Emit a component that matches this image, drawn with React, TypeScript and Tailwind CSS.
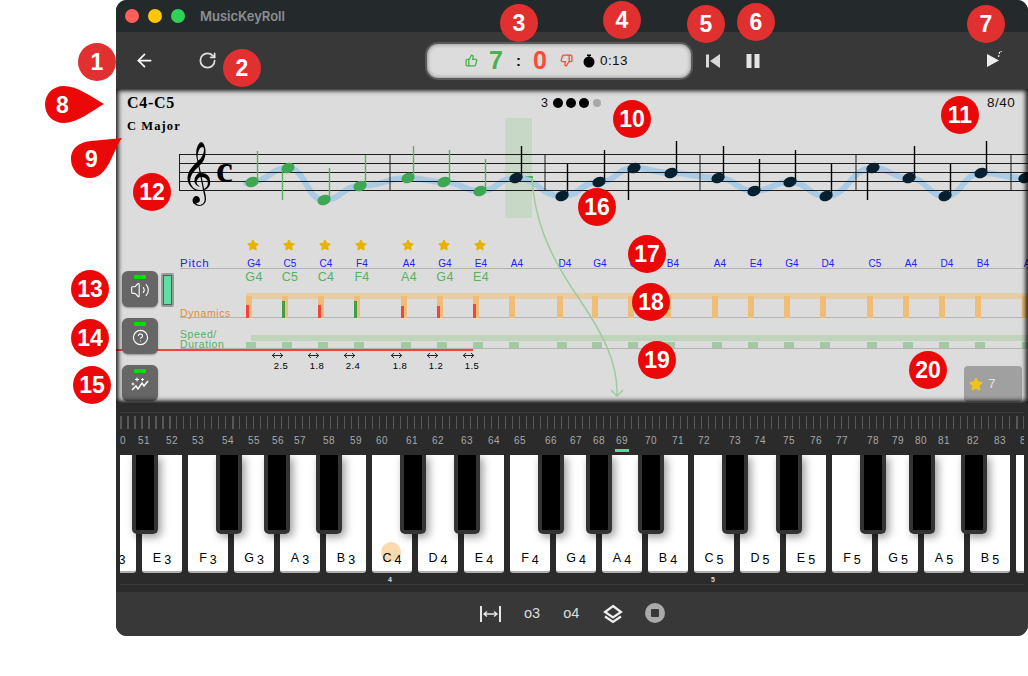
import { ArrowLeft, CircleHelp, RotateCw, ThumbsDown, ThumbsUp, Volume2 } from "lucide-react";
import { FaStar } from "react-icons/fa";

const SANS = "font-['Liberation_Sans',Arial,sans-serif]";

// x of note heads on the staff, head y, stem end y. stem goes down when down is set
const notes = [
  { x: 252, y: 182, end: 151 },
  { x: 288, y: 168, end: 200, down: true },
  { x: 324, y: 200, end: 168 },
  { x: 360, y: 186, end: 155 },
  { x: 408, y: 178, end: 146 },
  { x: 444, y: 182, end: 150 },
  { x: 480, y: 191, end: 159 },
  { x: 516, y: 178, end: 146 },
  { x: 562, y: 196, end: 164 },
  { x: 599, y: 182, end: 150 },
  { x: 634, y: 168, end: 200, down: true },
  { x: 671, y: 173, end: 141 },
  { x: 718, y: 178, end: 146 },
  { x: 754, y: 191, end: 159 },
  { x: 790, y: 182, end: 150 },
  { x: 826, y: 196, end: 164 },
  { x: 873, y: 168, end: 200, down: true },
  { x: 909, y: 178, end: 146 },
  { x: 945, y: 196, end: 164 },
  { x: 981, y: 173, end: 141 },
  { x: 1025, y: 178, end: 146 },
];

const ticks = [246, 282, 318, 354, 401, 437, 473, 509, 557, 592, 628, 665, 712, 748, 784, 820, 867, 903, 939, 975, 1022];
const pitchNames = ["G4", "C5", "C4", "F4", "A4", "G4", "E4", "A4", "D4", "G4", "C5", "B4", "A4", "E4", "G4", "D4", "C5", "A4", "D4", "B4", "A4"];
const played = pitchNames.slice(0, 7);
const hits = [
  { h: 13, good: false },
  { h: 17, good: true },
  { h: 13, good: false },
  { h: 17, good: true },
  { h: 12, good: false },
  { h: 12, good: false },
  { h: 14, good: false },
];
const durations = [
  { x: 281, v: "2.5" },
  { x: 317, v: "1.8" },
  { x: 353, v: "2.4" },
  { x: 400, v: "1.8" },
  { x: 436, v: "1.2" },
  { x: 472, v: "1.5" },
];

const whiteKeys = ["D3", "E3", "F3", "G3", "A3", "B3", "C4", "D4", "E4", "F4", "G4", "A4", "B4", "C5", "D5", "E5", "F5", "G5", "A5", "B5", "C6"];
const blackKeys = [132, 216, 264, 316, 400, 454, 538, 586, 638, 722, 776, 860, 909, 961];
const midiNumbers = [
  [50, 120], [51, 144], [52, 172], [53, 198], [54, 228], [55, 254], [56, 278], [57, 300], [58, 329], [59, 356], [60, 382],
  [61, 412], [62, 438], [63, 467], [64, 494], [65, 520], [66, 551], [67, 576], [68, 599], [69, 622], [70, 651], [71, 678],
  [72, 704], [73, 735], [74, 760], [75, 789], [76, 816], [77, 842], [78, 873], [79, 898], [80, 921], [81, 944], [82, 973],
  [83, 1000], [84, 1026],
];

// callout numbers over the screenshot
const badges = [
  { n: 1, cls: "left-[78px] top-[43px] bg-[#e03030]" },
  { n: 2, cls: "left-[223px] top-[49px] bg-[#e03030]" },
  { n: 3, cls: "left-[500px] top-[4px] bg-[#e03030]" },
  { n: 4, cls: "left-[603px] top-[1px] bg-[#e03030]" },
  { n: 5, cls: "left-[687px] top-[5px] bg-[#e03030]" },
  { n: 6, cls: "left-[737px] top-[3px] bg-[#e03030]" },
  { n: 7, cls: "left-[967px] top-[5px] bg-[#e03030]" },
  { n: 10, cls: "left-[613px] top-[100px] bg-[#ea0808]" },
  { n: 11, cls: "left-[941px] top-[96px] bg-[#ea0808]" },
  { n: 12, cls: "left-[133px] top-[173px] bg-[#ea0808]" },
  { n: 13, cls: "left-[71px] top-[270px] bg-[#ea0808]" },
  { n: 14, cls: "left-[71px] top-[319px] bg-[#ea0808]" },
  { n: 15, cls: "left-[73px] top-[366px] bg-[#ea0808]" },
  { n: 16, cls: "left-[578px] top-[188px] bg-[#ea0808]" },
  { n: 17, cls: "left-[628px] top-[235px] bg-[#ea0808]" },
  { n: 18, cls: "left-[632px] top-[283px] bg-[#ea0808]" },
  { n: 19, cls: "left-[638px] top-[341px] bg-[#ea0808]" },
  { n: 20, cls: "left-[909px] top-[351px] bg-[#ea0808]" },
];

function ribbonPath() {
  let d = `M${notes[0].x - 6} ${notes[0].y + 1}`;
  for (let i = 0; i < notes.length - 1; i++) {
    const a = notes[i];
    const b = notes[i + 1];
    const mid = (a.x + b.x) / 2;
    d += ` C${mid} ${a.y} ${mid} ${b.y} ${b.x} ${b.y}`;
  }
  return d;
}

function Staff() {
  return (
    <svg viewBox="116 130 912 95" className="relative block h-[95px] w-[912px] shrink-0">
      <path d={ribbonPath()} fill="none" stroke="#a9cbe6" strokeWidth="6" strokeLinecap="round" />
      {[154.5, 163.5, 172.5, 181.5, 190.5].map((y) => (
        <line key={y} x1="179" x2="1028" y1={y} y2={y} stroke="#1c1c1c" strokeWidth="1" />
      ))}
      {[179.5, 390, 545, 700, 856, 1011].map((x) => (
        <line key={x} x1={x} x2={x} y1="154" y2="191" stroke="#1c1c1c" strokeWidth="1" />
      ))}
      <text x="181" y="190" fontSize="54" fontFamily="DejaVu Sans" fill="#000">𝄞</text>
      <text x="216" y="182" fontSize="38" fontWeight="700" fontFamily="Liberation Serif" fill="#000">c</text>
      {notes.map((n, i) => {
        const green = i < 7;
        const stemX = n.down ? n.x - 5.5 : n.x + 5.5;
        return (
          <g key={n.x}>
            <line x1={stemX} x2={stemX} y1={n.y} y2={n.end} stroke={green ? "#56b45f" : "#000"} strokeWidth="1.4" />
            <ellipse cx={n.x} cy={n.y} rx="6.8" ry="5" transform={`rotate(-20 ${n.x} ${n.y})`} fill={green ? "#3fa754" : "#07202f"} />
          </g>
        );
      })}
    </svg>
  );
}

function Lanes() {
  return (
    <div className={`${SANS} flex flex-col`}>
      <div className="relative mt-[13px] h-[14px]">
        {played.map((_, i) => (
          <FaStar key={i} size={12} className="absolute top-px text-[#e5b300]" style={{ left: ticks[i] + 1 - 116 }} />
        ))}
      </div>
      <div className="relative mt-[4px] ml-[64px] h-[13px] border-b border-[#b4b4b4]">
        <span className="absolute left-0 top-[1px] text-[11.5px] leading-[13px] tracking-[0.8px] text-[#2222f0]">Pitch</span>
        {pitchNames.map((p, i) => (
          <span key={i} className="absolute top-[2px] -translate-x-1/2 text-[10px] leading-[11px] tracking-[0.2px] text-[#2222f0]" style={{ left: ticks[i] + 8 - 180 }}>
            {p}
          </span>
        ))}
      </div>
      <div className="relative mt-[1px] ml-[64px] h-[14px]">
        {played.map((p, i) => (
          <span key={i} className="absolute top-0 -translate-x-1/2 text-[12.5px] leading-[14px] tracking-[0.3px] text-[#55b25e]" style={{ left: ticks[i] + 8 - 180 }}>
            {p}
          </span>
        ))}
      </div>
      <div className="relative mt-[9px] h-[25px] border-b-0">
        <div className="absolute left-[130px] right-0 top-0 h-[6px] bg-[#e8cca8]" />
        <div className="absolute left-[64px] right-0 bottom-0 h-px bg-[#b4b4b4]" />
        <span className="absolute left-[64px] bottom-[-1px] text-[10.5px] leading-[12px] tracking-[0.6px] text-[#e08e2b]">Dynamics</span>
        {ticks.map((x) => (
          <div key={x} className="absolute bottom-0 top-[3px] w-[6px] bg-[#efbd75]" style={{ left: x - 116 }} />
        ))}
        {hits.map((h, i) => (
          <div
            key={i}
            className={h.good ? "absolute bottom-0 w-[3px] bg-[#3f9c48]" : "absolute bottom-0 w-[3px] bg-[#f4433a]"}
            style={{ left: ticks[i] - 116, height: h.h }}
          />
        ))}
      </div>
      <div className="relative mt-[8px] h-[23px]">
        <div className="absolute left-[135px] right-0 top-[9px] h-[6px] bg-[#c0d4bc]" />
        <div className="absolute left-[64px] right-0 bottom-0 h-px bg-[#b4b4b4]" />
        <span className="absolute left-[64px] top-[3px] text-[10.5px] leading-[10px] tracking-[0.6px] text-[#55b25e]">
          Speed/
          <br />
          Duration
        </span>
        {ticks.map((x) => (
          <div key={x} className="absolute bottom-[1px] h-[6px] w-[10px] bg-[#a2c9a4]" style={{ left: x - 116 }} />
        ))}
        <div className="absolute bottom-[-2px] left-0 h-[2px] w-[357px] bg-[#f4433a]" />
      </div>
      <div className="relative mt-[3px] h-[24px] text-black">
        {durations.map((d) => (
          <div key={d.x} className="absolute top-0 flex -translate-x-1/2 flex-col items-center" style={{ left: d.x - 116 }}>
            <svg viewBox="0 0 12 7" className="mr-[7px] h-[7px] w-[12px]">
              <path d="M.7 3.5h10.6M3.5 1 .8 3.5 3.5 6M8.500 1l2.700 2.500L8.500 6" fill="none" stroke="#111" strokeWidth="0.9" />
            </svg>
            <span className="mt-[1px] text-[9.5px] leading-[11px] tracking-[0.4px]">{d.v}</span>
          </div>
        ))}
      </div>
    </div>
  );
}

function SideButton({ children }: { children: React.ReactNode }) {
  return (
    <div className="relative flex h-[36px] w-[36px] items-center justify-center rounded-[6px] bg-[#666] pt-[2px] shadow-[0_1px_2px_rgba(0,0,0,0.35)]">
      <div className="absolute left-[12px] top-[4px] h-[4px] w-[12px] bg-[#00e000]" />
      {children}
    </div>
  );
}

function Score() {
  return (
    <div className="relative h-[314px] w-full shrink-0 overflow-hidden bg-[#dcdcdc]">
      <div className="absolute left-[389px] top-[29px] h-[100px] w-[27px] bg-[#c8d8c6]" />
      <div className="absolute left-[405px] top-[87px] h-[3px] w-[12px] bg-[#4caf50]" />
      <div className={`${SANS} relative flex h-[41px] pl-[11px] pt-[5px]`}>
        <div className="w-[414px] font-['Liberation_Serif',serif] font-bold text-black">
          <div className="text-[16px] leading-[18px] tracking-[0.7px]">C4-C5</div>
          <div className="mt-[7px] text-[12.5px] leading-[14px] tracking-[1.1px]">C Major</div>
        </div>
        <div className="flex h-[18px] w-[446px] items-center text-[12.5px] text-[#111]">
          3
          <span className="ml-[5px] h-[10px] w-[10px] rounded-full bg-black" />
          <span className="ml-[3px] h-[10px] w-[10px] rounded-full bg-black" />
          <span className="ml-[3px] h-[10px] w-[10px] rounded-full bg-black" />
          <span className="ml-[4px] h-[8px] w-[8px] rounded-full bg-[#a8a8a8]" />
        </div>
        <div className="h-[18px] text-[13.5px] leading-[18px] tracking-[0.5px] text-[#111]">8/40</div>
      </div>
      <Staff />
      <Lanes />

      <svg viewBox="116 89 912 314" className="pointer-events-none absolute left-0 top-0 h-[314px] w-[912px]">
        <path d="M532 178C534 215 546 252 580 300C600 330 618 360 617 395M611 390l6 6 6-6" fill="none" stroke="#9ccc9e" strokeWidth="1.5" />
      </svg>

      <div className="absolute left-[6px] top-[182px] flex flex-col gap-[11px]">
        <SideButton>
          <Volume2 size={20} strokeWidth={1.3} className="text-white" />
        </SideButton>
        <SideButton>
          <CircleHelp size={17} strokeWidth={1.6} className="text-white" />
        </SideButton>
        <SideButton>
          <svg viewBox="0 0 18 16" className="h-[16px] w-[18px]" fill="none" stroke="#fff" strokeWidth="1.5">
            <path d="M1 14l4-4 2 3 4-6 2 3 4-5" />
            <path d="M6 1.500v4M4 3.500h4M2 6.500v3M.5 8h3M11.500 2v3M10 3.500h3" strokeWidth="1" />
          </svg>
        </SideButton>
      </div>
      <div className="absolute left-[45px] top-[184px] h-[34px] w-[13px] rounded-[2px] bg-[#9a9a9a] p-[2px]">
        <div className="h-full w-full border border-[#3d6b55] bg-[#60e0a0]" />
      </div>

      <div className={`${SANS} absolute right-[6px] top-[277px] flex h-[36px] w-[58px] items-center rounded-[4px] bg-[#a0a0a0] pl-[5px] text-[13.5px] text-[#e2e2e2]`}>
        <FaStar size={14} className="text-[#f2c40f]" />
        <span className="ml-[5px]">7</span>
      </div>

      <div className="pointer-events-none absolute inset-0 shadow-[inset_0_2px_5px_rgba(0,0,0,0.55),inset_3px_0_4px_rgba(0,0,0,0.55),inset_-3px_0_4px_rgba(0,0,0,0.55),inset_0_-3px_4px_rgba(0,0,0,0.55)]" />
    </div>
  );
}

function Keyboard() {
  return (
    <div className={`${SANS} relative flex h-[189px] w-full shrink-0 flex-col bg-[#2b2b2b]`}>
      <div className="mx-[4px] mt-[9px] border-t border-[#3a3a3a]" />
      <div className="mx-[4px] mt-[3px] h-[13px] bg-[repeating-linear-gradient(90deg,#585858_0,#585858_1.500px,transparent_1.500px,transparent_7px)]" />
      <div className="relative mx-[4px] h-[26px] overflow-hidden">
        {midiNumbers.map(([n, x]) => (
          <span key={n} className="absolute top-[6px] -translate-x-1/2 text-[10px] leading-[11px] tracking-[0.4px] text-[#a8a8a8]" style={{ left: x - 120 }}>
            {n}
          </span>
        ))}
        <div className="absolute left-[495px] top-[20px] h-[3px] w-[14px] bg-[#4ce0a0]" />
      </div>
      <div className="relative mx-[4px] h-[118px] overflow-hidden">
        <div className="ml-[-24px] flex h-full gap-[6px]">
          {whiteKeys.map((k) => (
            <div key={k} className="relative flex h-full w-[40px] shrink-0 items-end justify-center rounded-b-[3px] border-b-2 border-[#b0b0b0] bg-white pb-[4px] text-black">
              {k === "C4" && <div className="absolute left-[9px] top-[87px] h-[20px] w-[20px] rounded-full bg-[#fbd9ae]" />}
              <span className="relative mb-[2px] text-[12.5px] leading-[14px]">{k[0]}</span>
              <span className="relative ml-[3px] text-[12.5px] leading-[13px]">{k[1]}</span>
            </div>
          ))}
        </div>
        {blackKeys.map((x) => (
          <div
            key={x}
            className="absolute top-0 h-[79px] w-[26px] rounded-b-[5px] border-x-[4px] border-b-[4px] border-[#333] bg-black shadow-[3px_3px_8px_rgba(0,0,0,0.4)]"
            style={{ left: x - 120 }}
          />
        ))}
      </div>
      <div className="relative mx-[4px] h-[12px] border-b border-[#3a3a3a] text-[7px] font-bold leading-[12px] text-[#ddd]">
        <span className="absolute left-[268px] top-[1px]">4</span>
        <span className="absolute left-[591px] top-[1px]">5</span>
      </div>
    </div>
  );
}

function App() {
  return (
    <div className="relative h-[676px] w-[1028px] overflow-hidden bg-white">
      <div className="ml-[116px] flex h-[636px] w-[912px] flex-col overflow-hidden rounded-[11px] bg-[#383838]">
        <div className="flex h-[32px] w-full shrink-0 items-center bg-[#24292c] pl-[9px]">
          <span className="h-[14px] w-[14px] rounded-full bg-[#ff5f57]" />
          <span className="ml-[9px] h-[14px] w-[14px] rounded-full bg-[#ffc800]" />
          <span className="ml-[9px] h-[14px] w-[14px] rounded-full bg-[#30d158]" />
          <span className="ml-[15px] mt-[1px] font-['Inter',sans-serif] text-[13px] font-semibold text-[#8b9094]">MusicKeyRoll</span>
        </div>

        <div className={`${SANS} flex h-[57px] w-full shrink-0 items-center bg-[#383838] pl-[18px]`}>
          <ArrowLeft size={21} strokeWidth={2} className="text-white" />
          <RotateCw size={19} strokeWidth={2.2} className="ml-[43px] text-[#e0e0e0]" />
          <div className="ml-[210px] flex h-[34px] w-[264px] items-center rounded-[11px] bg-[#dcdcdc] pl-[38px] shadow-[0_0_0_2px_#5a5a5a,inset_0_0_4px_rgba(0,0,0,0.45)]">
            <ThumbsUp size={13} strokeWidth={2.4} className="text-[#4caf50]" />
            <span className="ml-[11px] w-[16px] text-[25px] font-bold leading-none text-[#4caf50]">7</span>
            <span className="ml-[11px] text-[15px] font-bold leading-none text-[#111]">:</span>
            <span className="ml-[12px] w-[17px] text-[25px] font-bold leading-none text-[#ff4a3a]">0</span>
            <ThumbsDown size={13} strokeWidth={2.4} className="ml-[10px] text-[#ff4a3a]" />
            <svg viewBox="0 0 12 14" className="ml-[10px] h-[14px] w-[12px]">
              <circle cx="6" cy="8" r="5.500" fill="#000" />
              <rect x="4" y="0.500" width="4" height="1.500" fill="#000" />
              <rect x="5.300" y="1.500" width="1.400" height="2" fill="#000" />
            </svg>
            <span className="ml-[5px] text-[13.5px] leading-none tracking-[0.4px] text-[#111]">0:13</span>
          </div>
          <svg viewBox="0 0 14 14" className="ml-[15px] h-[14px] w-[14px]" fill="#d8d8d8">
            <rect x="0" y="0.500" width="3" height="13" />
            <path d="M14 0 4 7l10 7z" />
          </svg>
          <svg viewBox="0 0 14 14" className="ml-[26px] h-[14px] w-[14px]" fill="#e4e4e4">
            <rect x="0.500" y="0" width="5" height="14" />
            <rect x="8.500" y="0" width="5" height="14" />
          </svg>
          <svg viewBox="0 0 15 19" className="mb-[6px] ml-[227px] h-[19px] w-[15px]" fill="#eee">
            <path d="M0 6l12 6.500L0 19z" />
            <path d="M11.500 9l1.300-5.500h2" fill="none" stroke="#eee" strokeWidth="1.200" strokeDasharray="2 1.200" />
          </svg>
        </div>

        <Score />
        <Keyboard />

        <div className={`${SANS} flex h-[44px] w-full shrink-0 items-center bg-[#383838] pl-[364px] text-[14.5px] text-[#ddd]`}>
          <svg viewBox="0 0 21 16" className="h-[16px] w-[21px]" fill="none" stroke="#e6e6e6">
            <path d="M1 0v16M20 0v16" strokeWidth="2" />
            <path d="M4 8h13M7 5.500 4 8l3 2.500M14 5.500 17 8l-3 2.500" strokeWidth="1.400" />
          </svg>
          <span className="ml-[23px]">o3</span>
          <span className="ml-[23px]">o4</span>
          <svg viewBox="0 0 20 20" className="ml-[24px] h-[20px] w-[20px]" fill="none" stroke="#f0f0f0" strokeWidth="2.200">
            <path d="M10 2 18 8l-8 5.500L2 8z" />
            <path d="M2 12.500 10 18l8-5.500" />
          </svg>
          <div className="ml-[22px] mb-[3px] flex h-[20px] w-[20px] items-center justify-center rounded-full bg-[#aaa]">
            <div className="h-[8px] w-[8px] rounded-[1px] bg-[#383838]" />
          </div>
        </div>
      </div>

      {badges.map((b) => (
        <div
          key={b.n}
          className={`absolute flex h-[38px] w-[38px] items-center justify-center rounded-full font-['Liberation_Sans',Arial,sans-serif] text-[23px] font-bold text-white ${b.cls}`}
        >
          {b.n}
        </div>
      ))}
      <svg viewBox="0 0 60 40" className="absolute left-[43px] top-[85px] h-[40px] w-[62px]">
        <path d="M20 1C33 1 48 12 60 19C48 26 33 38 20 38C9 38 1 30 1 19.500C1 9 9 1 20 1Z" fill="#ea0808" />
      </svg>
      <span className="absolute left-[56px] top-[91px] font-['Liberation_Sans',Arial,sans-serif] text-[23px] font-bold leading-[28px] text-white">8</span>
      <svg viewBox="0 0 52 42" className="absolute left-[71px] top-[137px] h-[42px] w-[52px]">
        <path d="M51 1C42 12 38 41 19 41C8 41 0 33 0 22C0 10 10 5 20 4C30 3 42 2 51 1Z" fill="#ea0808" />
      </svg>
      <span className="absolute left-[85px] top-[145px] font-['Liberation_Sans',Arial,sans-serif] text-[23px] font-bold leading-[28px] text-white">9</span>
    </div>
  );
}

export default App;
